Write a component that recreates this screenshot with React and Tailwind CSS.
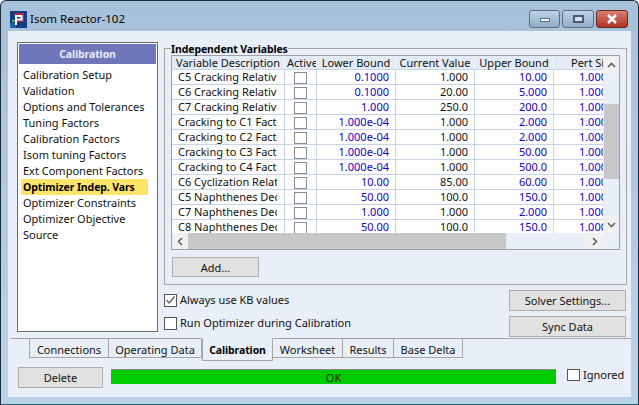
const sideItems = [
  'Calibration Setup',
  'Validation',
  'Options and Tolerances',
  'Tuning Factors',
  'Calibration Factors',
  'Isom tuning Factors',
  'Ext Component Factors',
  'Optimizer Indep. Vars',
  'Optimizer Constraints',
  'Optimizer Objective',
  'Source',
];

const rows = [
  ['C5 Cracking Relative', '0.1000', '1.000', '10.00'],
  ['C6 Cracking Relative', '0.1000', '20.00', '5.000'],
  ['C7 Cracking Relative', '1.000', '250.0', '200.0'],
  ['Cracking to C1 Factor', '1.000e-04', '1.000', '2.000'],
  ['Cracking to C2 Factor', '1.000e-04', '1.000', '2.000'],
  ['Cracking to C3 Factor', '1.000e-04', '1.000', '50.00'],
  ['Cracking to C4 Factor', '1.000e-04', '1.000', '500.0'],
  ['C6 Cyclization Relative', '10.00', '85.00', '60.00'],
  ['C5 Naphthenes Decay', '50.00', '100.0', '150.0'],
  ['C7 Naphthenes Decay', '1.000', '1.000', '2.000'],
  ['C8 Naphthenes Decay', '50.00', '100.0', '150.0'],
];

const tabs = [
  { label: 'Connections', cls: 'w-[80px]' },
  { label: 'Operating Data', cls: 'w-[93px]' },
  { label: 'Calibration', cls: 'w-[71px]', active: true },
  { label: 'Worksheet', cls: 'w-[70px]' },
  { label: 'Results', cls: 'w-[51px]' },
  { label: 'Base Delta', cls: 'w-[69px]' },
];

function Check({ checked, className = '' }) {
  return (
    <span className={`flex items-center justify-center shrink-0 bg-white border ${className}`}>
      {checked && (
        <svg width="11" height="10" viewBox="0 0 11 10">
          <path d="M1.5 5 L4.2 8 L9.5 1.5" fill="none" stroke="#666" strokeWidth="1.4" />
        </svg>
      )}
    </span>
  );
}

function WinButton({ label, className = '' }) {
  return (
    <button className={`flex items-center justify-center pt-[2px] bg-[#e1e1e1] border border-[#adadad] text-[#111] ${className}`}>
      {label}
    </button>
  );
}

function Logo() {
  return (
    <svg width="17" height="17" viewBox="0 0 17 17" className="shrink-0">
      <rect width="17" height="17" fill="#0f3f86" />
      <rect x="0" y="12" width="6" height="5" fill="#1f63a8" />
      <path d="M4 3 H13 V10 H6" fill="none" stroke="#e0283c" strokeWidth="1.6" />
      <path d="M6 14 V5 H11.5 V8.5 H6.5" fill="none" stroke="#fff" strokeWidth="2" />
      <rect x="2" y="9" width="3" height="1.5" fill="#6fc24a" />
    </svg>
  );
}

function Caption({ children, className = '' }) {
  return (
    <div className={`flex items-center justify-center h-[18px] border border-[#5d6b80] rounded-[3px] ${className}`}>
      {children}
    </div>
  );
}

function DataTable() {
  return (
    <div className="w-[449px] h-[195px] border border-[#a0a0a0] flex flex-col bg-[#e8eff9]">
      <div className="flex h-[177px]">
        <div className="w-[431px] overflow-hidden bg-white">
          <div className="flex h-[14px] leading-[14px] bg-[#e3ebf6] border-b border-[#c8d5e8] whitespace-nowrap">
            <div className="w-[113px] pl-[4px] border-r border-[#f2f5fb] shrink-0 overflow-hidden">Variable Description</div>
            <div className="w-[32px] pl-[2px] border-r border-[#f2f5fb] shrink-0 overflow-hidden">Active</div>
            <div className="w-[79px] text-center border-r border-[#f2f5fb] shrink-0">Lower Bound</div>
            <div className="w-[79px] text-center border-r border-[#f2f5fb] shrink-0">Current Value</div>
            <div className="w-[79px] text-center border-r border-[#f2f5fb] shrink-0">Upper Bound</div>
            <div className="w-[49px] pl-[17px] shrink-0 overflow-hidden">Pert Size</div>
          </div>
          {rows.map((r, i) => (
            <div key={i} className="flex h-[15px] leading-[14px] border-b border-[#c8d5e8] whitespace-nowrap">
              <div className="w-[113px] pl-[6px] pr-[7px] border-r border-[#c8d5e8] shrink-0">
                <div className="overflow-hidden">{r[0]}</div>
              </div>
              <div className="w-[32px] border-r border-[#c8d5e8] shrink-0 flex justify-center pt-[2px] pr-[1px]">
                <Check className="w-[13px] h-[12px] border-[#8c8c8c]" />
              </div>
              <div className="w-[79px] text-right pr-[6px] border-r border-[#c8d5e8] shrink-0 text-[#1400c8]">{r[1]}</div>
              <div className="w-[79px] text-right pr-[6px] border-r border-[#c8d5e8] shrink-0">{r[2]}</div>
              <div className="w-[79px] text-right pr-[6px] border-r border-[#c8d5e8] shrink-0 text-[#1400c8]">{r[3]}</div>
              <div className="w-[49px] shrink-0 overflow-hidden">
                <div className="w-[59px] text-right pr-[6px] text-[#1400c8]">1.000</div>
              </div>
            </div>
          ))}
        </div>
        {/* vertical scroll bar */}
        <div className="w-[15px] ml-[1px] flex flex-col">
          <div className="h-[17px] bg-[#f0f0f0] flex items-center justify-center">
            <svg width="9" height="6" viewBox="0 0 9 6"><path d="M1 5 L4.5 1.5 L8 5" fill="none" stroke="#606060" strokeWidth="1.6" /></svg>
          </div>
          <div className="h-[31px]" />
          <div className="h-[75px] bg-[#c8c8c8]" />
          <div className="flex-1" />
          <div className="h-[17px] bg-[#f0f0f0] flex items-center justify-center">
            <svg width="9" height="6" viewBox="0 0 9 6"><path d="M1 1 L4.5 4.5 L8 1" fill="none" stroke="#606060" strokeWidth="1.6" /></svg>
          </div>
        </div>
      </div>
      {/* horizontal scroll bar */}
      <div className="flex h-[16px] w-[431px]">
        <div className="w-[16px] bg-[#f0f0f0] flex items-center justify-center">
          <svg width="6" height="9" viewBox="0 0 6 9"><path d="M5 1 L1.5 4.5 L5 8" fill="none" stroke="#606060" strokeWidth="1.6" /></svg>
        </div>
        <div className="w-[318px] bg-[#c8c8c8]" />
        <div className="flex-1" />
        <div className="w-[17px] bg-[#f0f0f0] flex items-center justify-center">
          <svg width="6" height="9" viewBox="0 0 6 9"><path d="M1 1 L4.5 4.5 L1 8" fill="none" stroke="#606060" strokeWidth="1.6" /></svg>
        </div>
      </div>
    </div>
  );
}

export default function App() {
  return (
    <div className="w-[639px] h-[405px] flex flex-col border border-[#1c2b38] border-b-[#1d5f74] rounded-t-[6px] bg-gradient-to-b from-[#a8c1da] to-[#bad2ea] overflow-hidden text-[11px] text-[#111] font-['Noto_Sans','Liberation_Sans',sans-serif]">
      {/* title bar */}
      <div className="h-[30px] flex items-center pt-[6px] pl-[9px] pr-[10px] shrink-0">
        <Logo />
        <span className="ml-[3px] text-[11.5px] leading-none text-black">Isom Reactor-102</span>
        <div className="ml-auto flex gap-[2px] -mt-[1px]">
          <Caption className="w-[31px] bg-gradient-to-b from-[#c0d3e6] to-[#8dabc9]">
            <span className="block w-[10px] h-[4px] mt-[3px] bg-[#f4f7fa] border border-[#5d6b80]" />
          </Caption>
          <Caption className="w-[32px] bg-gradient-to-b from-[#c0d3e6] to-[#8dabc9]">
            <span className="block w-[11px] h-[8px] border-[2px] border-[#4b5a70] bg-[#d7e2ee]" />
          </Caption>
          <Caption className="w-[32px] border-[#6b2a2a] bg-gradient-to-b from-[#d67f72] to-[#b0301f]">
            <svg width="12" height="10" viewBox="0 0 12 10">
              <path d="M2 1 L10 9 M10 1 L2 9" stroke="#fff" strokeWidth="2.6" />
            </svg>
          </Caption>
        </div>
      </div>

      {/* client area */}
      <div className="mx-[7px] w-[623px] h-[366px] bg-[#e8eff9] flex flex-col shrink-0">
        <div className="flex h-[307px] pt-[11px] pl-[9px]">
          {/* left nav */}
          <div className="w-[141px] h-[290px] border border-[#6a6a6a] bg-white p-[1px] shrink-0">
            <div className="h-[20px] bg-[#7076ba] text-[#e8ecf8] text-[10.5px] tracking-[-0.1px] font-bold text-center leading-[21px]">Calibration</div>
            <div className="pt-[3px] pl-[2px]">
              {sideItems.map(item => (
                <div
                  key={item}
                  className={item === 'Optimizer Indep. Vars'
                    ? 'h-[16px] leading-[16px] w-[127px] pl-[2px] bg-[#ffe46a] text-[10.5px] tracking-[-0.1px] font-bold text-black whitespace-nowrap'
                    : 'h-[16px] leading-[16px] pl-[2px] whitespace-nowrap'}
                >
                  {item}
                </div>
              ))}
            </div>
          </div>

          {/* right side */}
          <div className="ml-[6px] w-[463px] pt-[6px]">
            <div className="relative h-[237px] border border-[#a6a6a6] pl-[6px] pt-[6px]">
              <span className="absolute left-[6px] -top-[6px] h-[12px] leading-[12px] bg-[#e8eff9] text-[10.5px] tracking-[-0.1px] font-bold text-black">Independent Variables</span>
              <DataTable />
              <WinButton label="Add..." className="w-[87px] h-[20px] mt-[7px] ml-[1px]" />
            </div>
            <div className="flex justify-between mt-[5px]">
              <div className="flex flex-col gap-[11px] pt-[4px]">
                <label className="flex items-center h-[12px] gap-[3px]">
                  <Check checked className="w-[13px] h-[13px] border-[#555]" />
                  Always use KB values
                </label>
                <label className="flex items-center h-[12px] gap-[3px]">
                  <Check className="w-[13px] h-[13px] border-[#555]" />
                  Run Optimizer during Calibration
                </label>
              </div>
              <div className="flex flex-col gap-[5px] pr-[1px]">
                <WinButton label="Solver Settings..." className="w-[117px] h-[21px]" />
                <WinButton label="Sync Data" className="w-[117px] h-[21px]" />
              </div>
            </div>
          </div>
        </div>

        {/* tabs */}
        <div className="flex h-[23px] border-t border-[#a6a6a6] pl-[19px] ml-[2px] shrink-0">
          {tabs.map(t => (
            <div
              key={t.label}
              className={t.active
                ? `${t.cls} h-[23px] -mt-[1px] pt-[2px] border border-[#a6a6a6] border-t-transparent bg-[#e8eff9] text-[10.5px] tracking-[-0.1px] font-bold text-black flex items-center justify-center`
                : `${t.cls} h-[19px] pt-[4px] border-r border-b border-[#a6a6a6] first:border-l flex items-center justify-center whitespace-nowrap`}
            >
              {t.label}
            </div>
          ))}
        </div>

        {/* status row */}
        <div className="flex items-start pl-[10px] mt-[6px]">
          <WinButton label="Delete" className="w-[85px] h-[21px]" />
          <div className="ml-[8px] mt-[2px] w-[445px] h-[15px] pt-[2px] bg-[#00cc00] border-t border-[#8a8a8a] flex items-center justify-center text-[#222]">OK</div>
          <label className="flex items-center ml-[11px] gap-[3px]">
            <Check className="w-[13px] h-[12px] border-[#555]" />
            Ignored
          </label>
        </div>
      </div>
    </div>
  );
}
